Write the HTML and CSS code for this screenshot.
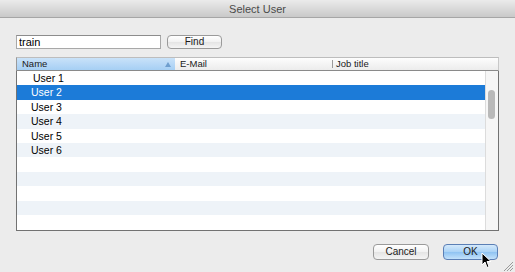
FILE: index.html
```html
<!DOCTYPE html>
<html lang="en">
<head>
  <meta charset="UTF-8">
  <title>Select User</title>
  <link rel="stylesheet" href="styles.css">
</head>
<body>
  <div class="window">
    <div class="titlebar">Select User</div>

    <div class="search-row">
      <input class="search" type="text" value="train">
      <button class="btn find">Find</button>
    </div>

    <div class="table">
      <div class="thead">
        <div class="th th-name">Name<span class="sort"></span></div>
        <div class="th th-mail">E-Mail</div>
        <div class="th th-job">Job title</div>
      </div>
      <div class="tbody">
        <div class="rows">
          <div class="row"><span class="cell first">User 1</span></div>
          <div class="row selected"><span class="cell">User 2</span></div>
          <div class="row"><span class="cell">User 3</span></div>
          <div class="row"><span class="cell">User 4</span></div>
          <div class="row"><span class="cell">User 5</span></div>
          <div class="row"><span class="cell">User 6</span></div>
          <div class="row"></div>
          <div class="row"></div>
          <div class="row"></div>
          <div class="row"></div>
          <div class="row"></div>
        </div>
        <div class="scrollbar"><div class="thumb"></div></div>
      </div>
    </div>

    <div class="actions">
      <button class="btn">Cancel</button>
      <button class="btn ok">OK</button>
    </div>

    <!-- mouse pointer over the OK button -->
    <svg class="cursor" width="11" height="17" viewBox="0 0 11 17">
      <path d="M1 1 L1 13 L4 10 L6 15.5 L8 14.6 L6 9.5 L10 9.5 Z" fill="#000" stroke="#fff" stroke-width="1"/>
    </svg>
    <!-- resize grip -->
    <svg class="grip" width="11" height="11" viewBox="0 0 11 11">
      <path d="M10 1 L1 10 M10 4 L4 10 M10 7 L7 10" stroke="#9a9a9a" stroke-width="1"/>
    </svg>
  </div>
</body>
</html>
```

FILE: styles.css
```css
body {
  margin: 0;
  font-family: "Liberation Sans", Arial, sans-serif;
}
.window {
  position: relative;
  width: 515px;
  height: 272px;
  background-color: #ececec;
  overflow: hidden;
}
.titlebar {
  height: 17px;
  line-height: 18px;
  text-align: center;
  font-size: 11px;
  color: #4a4a4a;
  background: linear-gradient(#ebebeb, #c9c9c9);
  border-bottom: 1px solid #a6a6a6;
}
.search-row {
  display: flex;
  gap: 6px;
  margin: 17px 0 0 16px;
  height: 14px;
}
.search {
  box-sizing: border-box;
  width: 145px;
  height: 14px;
  margin: 0;
  padding: 0 2px;
  border: 1px solid #a8a8a8;
  border-top-color: #8c8c8c;
  background: #fff;
  font-family: "Liberation Sans", Arial, sans-serif;
  font-size: 11px;
  color: #000;
  outline: none;
}
.btn {
  box-sizing: border-box;
  margin: 0;
  padding: 0;
  border: 1px solid #9a9a9a;
  border-radius: 4px;
  background: linear-gradient(#ffffff, #f1f1f1 50%, #e4e4e4 51%, #f4f4f4);
  font-family: "Liberation Sans", Arial, sans-serif;
  font-size: 10px;
  color: #1a1a1a;
}
.find {
  width: 55px;
  height: 14px;
  line-height: 12px;
}
.table {
  margin: 8px 0 0 16px;
  width: 483px;
}
.thead {
  display: flex;
  box-sizing: border-box;
  height: 14px;
  border-top: 1px solid #bdbdbd;
  border-bottom: 1px solid #8a8a8a;
  border-left: 1px solid #9a9a9a;
  border-right: 1px solid #c8c8c8;
  font-size: 9.5px;
  line-height: 12px;
  color: #1a1a1a;
}
.th {
  position: relative;
  box-sizing: border-box;
  background: linear-gradient(#fdfdfd, #ececec);
}
.th-name {
  width: 158px;
  padding-left: 5px;
  background: linear-gradient(#c9e2f9, #a6cff4);
}
.sort {
  position: absolute;
  right: 4px;
  top: 4px;
  width: 0;
  height: 0;
  border-left: 3px solid transparent;
  border-right: 3px solid transparent;
  border-bottom: 5px solid #6f9fcf;
}
.th-mail {
  width: 157px;
  padding-left: 5px;
}
.th-job {
  flex: 1;
  padding-left: 4px;
}
.th-job::before {
  content: "";
  position: absolute;
  left: 0;
  top: 2px;
  height: 8px;
  border-left: 1px solid #9a9a9a;
}
.tbody {
  display: flex;
  box-sizing: border-box;
  height: 160px;
  border: 1px solid #727272;
  border-top: none;
  background: #fff;
}
.rows {
  flex: 1;
}
.row {
  height: 14.4px;
  line-height: 14.4px;
  font-size: 10.5px;
  color: #000;
}
.row:nth-child(even) {
  background-color: #eef3f8;
}
.row.selected {
  background-color: #1c7bd8;
  color: #fff;
}
.cell {
  padding-left: 14px;
}
.cell.first {
  padding-left: 16px;
}
.scrollbar {
  width: 12px;
  border-left: 1px solid #dcdcdc;
  background: #f6f6f6;
}
.thumb {
  width: 7px;
  height: 29px;
  margin: 19px 0 0 2px;
  border-radius: 4px;
  background: #b9b9b9;
}
.actions {
  display: flex;
  justify-content: flex-end;
  gap: 14px;
  margin: 13px 17px 0 0;
}
.actions .btn {
  width: 56px;
  height: 16px;
  line-height: 14px;
}
.actions .ok {
  width: 55px;
  border-color: #5b7fb5;
  background: linear-gradient(#d4e9fb, #a9d2f6 50%, #8fc3f2 51%, #c3e2fb);
}
.cursor {
  position: absolute;
  left: 481px;
  top: 252px;
}
.grip {
  position: absolute;
  left: 503px;
  top: 261px;
}
```
